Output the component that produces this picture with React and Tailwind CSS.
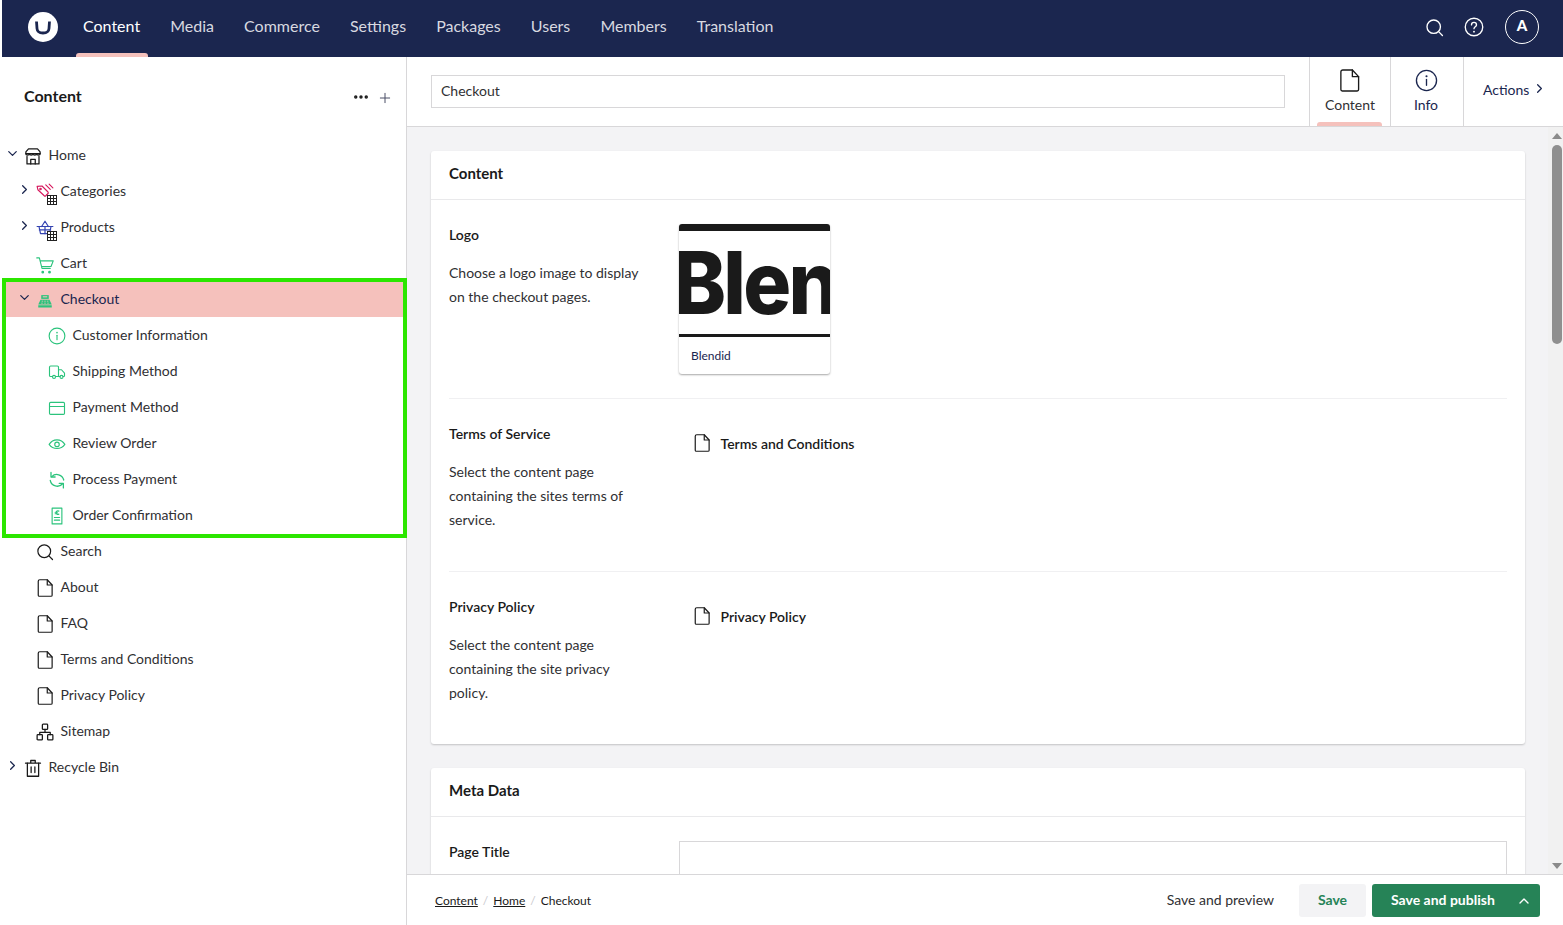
import React from 'react';
import { ChevronDown, ChevronRight, ChevronUp, Ellipsis, Plus } from 'lucide-react';

const green = '#2bc37c';

const Svg = ({ size = 18, color = '#1a1a1a', sw = 1.6, className = '', children }) => (
  <svg width={size} height={size} viewBox="0 0 24 24" fill="none" stroke={color} strokeWidth={sw} strokeLinecap="round" strokeLinejoin="round" className={className}>
    {children}
  </svg>
);

const PageIcon = (props) => (
  <Svg {...props}>
    <path d="M5 1h10l6.500 7v13.500a1.500 1.500 0 0 1-1.500 1.500H4.500A1.500 1.500 0 0 1 3 21.500V3a2 2 0 0 1 2-2z" />
    <path d="M15 1v7h6.500" />
  </Svg>
);

const SearchIcon = (props) => (
  <Svg {...props}>
    <circle cx="11" cy="11" r="8.500" />
    <path d="M17.500 17.500l4.500 4.500" />
  </Svg>
);

const HomeIcon = () => (
  <Svg sw={1.7}>
    <path d="M6 2.500h12l3.500 4v2.500h-19V6.500z" />
    <path d="M2.500 9c0 2.500 4.500 2.500 4.750 0 .25 2.500 4.500 2.500 4.750 0 .25 2.500 4.500 2.500 4.750 0 .25 2.500 4.750 2.500 4.750 0" />
    <path d="M4 12.500v10h16v-10" />
    <path d="M9 22.500v-6h6v6" />
  </Svg>
);

const GridBadge = () => (
  <svg width="10" height="10" viewBox="0 0 10 10" className="absolute right-[-3px] bottom-[-4px] bg-white" fill="none" stroke="#222" strokeWidth="1">
    <rect x="0.500" y="0.500" width="9" height="9" />
    <path d="M3.500 0v10M6.500 0v10M0 3.500h10M0 6.500h10" />
  </svg>
);

const TagIcon = () => (
  <span className="relative inline-flex">
    <Svg color="#d6175c" sw={1.500}>
      <path d="M1.500 4.500l6.500-.500 8 8a1.500 1.500 0 0 1 0 2l-3 3a1.500 1.500 0 0 1-2 0l-8.500-8z" />
      <circle cx="6" cy="8" r="1" />
      <path d="M13 2.500l6 6M17.500 1.500l5 5" />
    </Svg>
    <GridBadge />
  </span>
);

const BasketIcon = () => (
  <span className="relative inline-flex">
    <Svg color="#3544b1" sw={1.6}>
      <path d="M1.500 10h21M4 10l2 9.500h12L20 10" />
      <path d="M7.500 10L12 3l4.500 7M12 10v9.500M4.500 14.500h15" />
    </Svg>
    <GridBadge />
  </span>
);

const CartIcon = () => (
  <Svg size={20} color={green} sw={1.500}>
    <path d="M1 2.500h3.500l3.500 14h11M5.500 6.500H23l-3 7.500H7.500" />
    <circle cx="9" cy="21.500" r="1.100" fill={green} />
    <circle cx="18" cy="21.500" r="1.100" fill={green} />
  </Svg>
);

const RegisterIcon = () => (
  <svg width="18" height="18" viewBox="0 0 24 24" fill={green}>
    <rect x="3" y="19" width="18" height="3" />
    <path d="M6 11.500h12l3 6.500H3z" />
    <rect x="7" y="5.500" width="10" height="5" />
    <path d="M9 7h6v1.500H9z" fill="#f5c1bc" />
    <path d="M7.500 13h2v1H7.500zM11 13h2v1h-2zM14.500 13h2v1h-2zM7 15.500h2v1H7zM11 15.500h2v1h-2zM15 15.500h2v1h-2z" fill="#f5c1bc" />
  </svg>
);

const InfoIcon = ({ color = green, size = 18, sw = 1.5 }) => (
  <Svg color={color} size={size} sw={sw}>
    <circle cx="12" cy="12" r="10.500" />
    <path d="M12 11v6" />
    <path d="M12 7.500v.100" strokeWidth="2.200" />
  </Svg>
);

const TruckIcon = () => (
  <Svg color={green} sw={1.5}>
    <path d="M6 18H3.500A1.500 1.500 0 0 1 2 16.500v-11A1.500 1.500 0 0 1 3.500 4h9A1.500 1.500 0 0 1 14 5.500V18h-4" />
    <path d="M14 9h4l4 4.500V17a1 1 0 0 1-1 1h-1M16 18h-2" />
    <circle cx="8" cy="18.500" r="2" />
    <circle cx="18" cy="18.500" r="2" />
  </Svg>
);

const CardIcon = () => (
  <Svg color={green} sw={1.5}>
    <rect x="2" y="4.500" width="20" height="16" rx="1.500" />
    <path d="M2 10h20" />
  </Svg>
);

const EyeIcon = () => (
  <Svg color={green} sw={1.5}>
    <path d="M1.500 12.500C4 8.500 8 6.500 12 6.500s8 2 10.500 6c-2.500 3.500-6.500 5.500-10.500 5.500s-8-2-10.500-5.500z" />
    <circle cx="12" cy="12.500" r="3" />
  </Svg>
);

const RefreshIcon = () => (
  <Svg color={green} sw={1.7}>
    <path d="M5 7.500A9.500 9.500 0 0 1 21 12" />
    <path d="M19.500 17A9.500 9.500 0 0 1 3 12.500" />
    <path d="M4 2v6h5.500" />
    <path d="M20.500 22.500V16.500H15" />
  </Svg>
);

const ReceiptIcon = () => (
  <Svg color={green} sw={1.5}>
    <rect x="5.500" y="1.500" width="13" height="21" />
    <path d="M14.500 5.500c-2-.8-3.500 0-3.500 2s1.500 2.800 3.500 2M9.500 7h3M9.500 9h3M8.500 14h7M8.500 17.500h7" />
  </Svg>
);

const SitemapIcon = () => (
  <Svg sw={1.7}>
    <rect x="8.500" y="1.500" width="7" height="7" rx="1" />
    <rect x="1.500" y="15.500" width="7" height="7" rx="1" />
    <rect x="15.500" y="15.500" width="7" height="7" rx="1" />
    <path d="M12 8.500V12.500M5 15.500v-3h14v3" />
  </Svg>
);

const TrashIcon = () => (
  <Svg sw={1.7}>
    <path d="M2 5.500h20M9 5.500V2h6v3.500" />
    <path d="M4.500 5.500v17.500h15V5.500" />
    <path d="M9.500 10.500v7.500M14.500 10.500v7.500" />
  </Svg>
);

const indent = { 0: 'pl-0', 1: 'pl-3', 2: 'pl-6' };

const TreeRow = ({ depth, icon, label, arrow, active }) => (
  <div className={`flex items-center h-9 text-[14px] ${indent[depth]} ${active ? 'bg-[#f5c1bc] text-[#1b264f]' : 'text-[#303033]'}`}>
    <span className="w-5 flex justify-center shrink-0 text-[#1b264f] -mt-1">
      {arrow === 'down' && <ChevronDown size={15} strokeWidth={2} />}
      {arrow === 'right' && <ChevronRight size={15} strokeWidth={2} />}
    </span>
    <span className="ml-0.5 w-[18px] h-[18px] flex shrink-0 mt-[1px]">{icon}</span>
    <span className="ml-[6.500px] -mt-[2px]">{label}</span>
  </div>
);

const NavItem = ({ label, active }) => (
  <div className={`relative h-full flex items-center text-[16px] pb-[6px] ${active ? 'text-white' : 'text-[#d8d9e0]'}`}>
    {label}
    {active && <span className="absolute left-[-7px] right-[-8px] bottom-0 h-1 bg-[#f5c1bc] rounded-t-[3px]" />}
  </div>
);

const Picker = ({ label }) => (
  <div className="flex items-center h-[22px] mt-[9px] ml-[14px] font-semibold text-[14px] text-[#1a1a1a]">
    <PageIcon size={18} />
    <span className="ml-[9.500px]">{label}</span>
  </div>
);

const Field = ({ label, lines, children, last }) => (
  <div className={`flex pt-6 pb-6 ${last ? '' : 'border-b border-[#f0f0f2]'}`}>
    <div className="w-[230px] shrink-0">
      <div className="font-semibold text-[14px] leading-[22px] text-[#1a1a1a]">{label}</div>
      <div className="mt-[15px] mb-[15px] text-[14px] leading-6 text-[#303033]">
        {lines.map((l) => <div key={l}>{l}</div>)}
      </div>
    </div>
    {children}
  </div>
);

const App = () => {
  return (
    <div className="h-screen w-full overflow-hidden bg-white pl-[2px] flex flex-col text-[#1a1a1a]" style={{ fontFamily: 'Lato, sans-serif' }}>
      <header className="h-[57px] shrink-0 bg-[#1b264f] flex items-center pl-[25px] pr-[24px]">
        <svg width="32" height="32" viewBox="0 0 32 32" className="shrink-0 -mt-[4px]">
          <circle cx="16" cy="16" r="15" fill="#fff" />
          <path d="M9.500 10.500l.500 7c.200 3 2 4.500 6 4.500s5.800-1.500 6-4.500l.500-7" fill="none" stroke="#1b264f" strokeWidth="2.800" />
        </svg>
        <nav className="ml-[24px] h-full flex gap-[30.080px]">
          <NavItem label="Content" active />
          <NavItem label="Media" />
          <NavItem label="Commerce" />
          <NavItem label="Settings" />
          <NavItem label="Packages" />
          <NavItem label="Users" />
          <NavItem label="Members" />
          <NavItem label="Translation" />
        </nav>
        <div className="ml-auto flex items-center -mt-[3px]">
          <SearchIcon size={19} color="#fff" sw={1.7} />
          <span className="ml-[20px]"><svg width="20" height="20" viewBox="0 0 24 24" fill="none" stroke="#fff" strokeWidth="1.600" strokeLinecap="round" strokeLinejoin="round"><circle cx="12" cy="12" r="10.500" /><path d="M9 9.500a3 3 0 0 1 6 0c0 2-3 2.500-3 4.500" /><path d="M12 17.500v.100" strokeWidth="2.200" /></svg></span>
          <div className="ml-[21px] w-[34px] h-[34px] rounded-full border border-white text-white flex items-center justify-center text-[15px] font-black pb-[3px]">A</div>
        </div>
      </header>

      <div className="flex-1 min-h-0 flex">
        <aside className="w-[404px] shrink-0">
          <div className="h-[80px] flex items-center pl-[22px] pr-[13px]">
            <h1 className="text-[16px] font-bold text-[#1a1a1a] pb-[2px]">Content</h1>
            <Ellipsis size={18} strokeWidth={2.600} className="ml-auto text-[#1a1a1a]" />
            <Plus size={16} strokeWidth={1.500} className="ml-[7px] mt-[2px] text-[#4a4f66]" />
          </div>
          <div>
            <TreeRow depth={0} icon={<HomeIcon />} label="Home" arrow="down" />
            <TreeRow depth={1} icon={<TagIcon />} label="Categories" arrow="right" />
            <TreeRow depth={1} icon={<BasketIcon />} label="Products" arrow="right" />
            <TreeRow depth={1} icon={<CartIcon />} label="Cart" />
            <div className="relative">
              <TreeRow depth={1} icon={<RegisterIcon />} label="Checkout" arrow="down" active />
              <TreeRow depth={2} icon={<InfoIcon />} label="Customer Information" />
              <TreeRow depth={2} icon={<TruckIcon />} label="Shipping Method" />
              <TreeRow depth={2} icon={<CardIcon />} label="Payment Method" />
              <TreeRow depth={2} icon={<EyeIcon />} label="Review Order" />
              <TreeRow depth={2} icon={<RefreshIcon />} label="Process Payment" />
              <TreeRow depth={2} icon={<ReceiptIcon />} label="Order Confirmation" />
              <div className="absolute left-0 right-[-1px] top-[-3px] bottom-[-5px] border-4 border-[#2ce600] pointer-events-none" />
            </div>
            <TreeRow depth={1} icon={<SearchIcon size={18} />} label="Search" />
            <TreeRow depth={1} icon={<PageIcon />} label="About" />
            <TreeRow depth={1} icon={<PageIcon />} label="FAQ" />
            <TreeRow depth={1} icon={<PageIcon />} label="Terms and Conditions" />
            <TreeRow depth={1} icon={<PageIcon />} label="Privacy Policy" />
            <TreeRow depth={1} icon={<SitemapIcon />} label="Sitemap" />
            <TreeRow depth={0} icon={<TrashIcon />} label="Recycle Bin" arrow="right" />
          </div>
        </aside>

        <main className="flex-1 min-w-0 flex flex-col border-l border-[#d8d7d9]">
          <div className="h-[70px] shrink-0 flex border-b border-[#d8d7d9] bg-white">
            <div className="flex-1 pl-6 pr-6 pt-[18px]">
              <div className="h-[33px] border border-[#d8d7d9] flex items-center pl-[9px] pb-[2px] text-[14px] text-[#303033]">Checkout</div>
            </div>
            <div className="relative w-[81px] border-l border-[#d8d7d9] flex flex-col items-center pt-[12px] pr-[2px]">
              <PageIcon size={23} sw={1.400} />
              <span className="text-[14px] text-[#303033] mt-[2px] ml-[2px]">Content</span>
              <span className="absolute left-[7px] right-[8px] bottom-0 h-1 bg-[#f5c1bc] rounded-t-[3px]" />
            </div>
            <div className="w-[73px] border-l border-[#d8d7d9] flex flex-col items-center pt-[12px] pr-[2px] text-[#1b264f]">
              <InfoIcon color="#1b264f" size={23} sw={1.400} />
              <span className="text-[14px] mt-[2px]">Info</span>
            </div>
            <div className="w-[100px] border-l border-[#d8d7d9] flex items-center pl-[19px] pb-[5px] text-[14px] text-[#1b264f]">
              Actions
              <ChevronRight size={15} strokeWidth={2} className="ml-[3px] -mt-[2px]" />
            </div>
          </div>

          <div className="flex-1 min-h-0 flex bg-[#f3f3f5]">
            <div className="flex-1 min-w-0 overflow-hidden pl-6 pr-[23px] pt-6">
              <section className="bg-white rounded-[3px] shadow-[0_1px_2px_rgba(0,0,0,0.2)]">
                <div className="h-[49px] flex items-center px-[18px] pb-[3px] border-b border-[#e9e9eb] font-bold text-[15px] text-[#1a1a1a]">Content</div>
                <div className="px-[18px]">
                  <Field label="Logo" lines={['Choose a logo image to display', 'on the checkout pages.']}>
                    <div className="w-[151px] h-[150px] rounded-[3px] bg-white shadow-[0_1px_2px_rgba(0,0,0,0.35)] overflow-hidden flex flex-col">
                      <div className="h-[7px] bg-[#1a1a1a] shrink-0" />
                      <div className="h-[103px] flex items-center overflow-hidden shrink-0">
                        <span className="text-[86px] leading-none font-extrabold text-[#1a1a1a] whitespace-nowrap tracking-[-3px] -ml-[6px] origin-left scale-x-[0.93]" style={{ fontFamily: 'Inter, sans-serif' }}>Blen</span>
                      </div>
                      <div className="h-[3px] bg-[#1a1a1a] shrink-0" />
                      <div className="flex-1 flex items-center pl-3 text-[12px] text-[#1b264f]">Blendid</div>
                    </div>
                  </Field>
                  <Field label="Terms of Service" lines={['Select the content page', 'containing the sites terms of', 'service.']}>
                    <Picker label="Terms and Conditions" />
                  </Field>
                  <Field label="Privacy Policy" lines={['Select the content page', 'containing the site privacy', 'policy.']} last>
                    <Picker label="Privacy Policy" />
                  </Field>
                </div>
              </section>

              <section className="mt-6 bg-white rounded-[3px] shadow-[0_1px_2px_rgba(0,0,0,0.2)] h-[200px]">
                <div className="h-[49px] flex items-center px-[18px] pb-[3px] border-b border-[#e9e9eb] font-bold text-[15px] text-[#1a1a1a]">Meta Data</div>
                <div className="flex px-[18px] pt-6">
                  <div className="w-[230px] shrink-0 font-semibold text-[14px] leading-[22px]">Page Title</div>
                  <div className="flex-1 h-[36px] border border-[#d8d7d9]" />
                </div>
              </section>
            </div>

            <div className="w-[15px] shrink-0 bg-[#f1f1f1] flex flex-col items-center pl-[3px] pt-[6px] pb-[5px]">
              <span className="w-0 h-0 border-x-[5px] border-x-transparent border-b-[6px] border-b-[#8a8a8a]" />
              <span className="mt-[6px] w-[10px] h-[199px] rounded-full bg-[#8f8f8f]" />
              <span className="mt-auto w-0 h-0 border-x-[5px] border-x-transparent border-t-[6px] border-t-[#8a8a8a]" />
            </div>
          </div>

          <footer className="h-[51px] shrink-0 border-t border-[#d8d7d9] bg-white flex items-center pl-7 pr-[23px]">
            <div className="flex items-center text-[12px] text-[#1a1a1a] mt-[2px]">
              <span className="underline">Content</span>
              <span className="mx-[5px] text-[#c9c9ce]">/</span>
              <span className="underline">Home</span>
              <span className="mx-[5px] text-[#c9c9ce]">/</span>
              <span>Checkout</span>
            </div>
            <span className="ml-auto text-[14px] text-[#303033] -mt-[2px]">Save and preview</span>
            <button className="ml-[25px] mt-[1px] pb-[2px] w-[67px] h-[33px] rounded-[3px] bg-[#f3f3f5] text-[14px] font-bold text-[#268357]">Save</button>
            <button className="ml-[6px] mt-[1px] w-[168px] h-[33px] rounded-[3px] bg-[#268357] text-white text-[14px] font-bold flex items-center pl-[19px] pr-[8px]">
              <span className="pb-[2px]">Save and publish</span>
              <ChevronUp size={16} strokeWidth={2} className="ml-auto" />
            </button>
          </footer>
        </main>
      </div>
    </div>
  );
};

export default App;
